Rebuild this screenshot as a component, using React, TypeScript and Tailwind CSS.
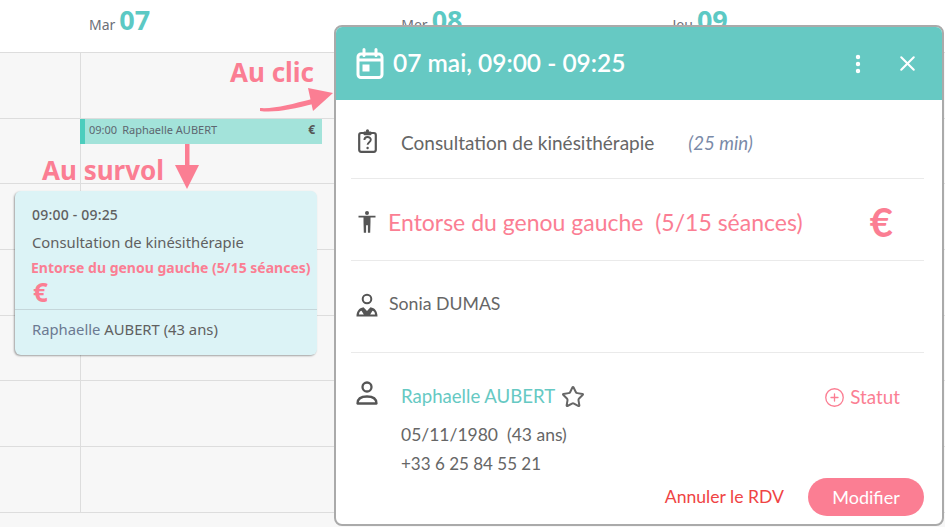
import { X, MoreVertical, Star, CirclePlus } from 'lucide-react';

const rows = [0, 1, 2, 3, 4, 5, 6];

function CalendarIcon() {
    return (
        <svg width="28" height="31" viewBox="0 0 28 31" fill="none" className="shrink-0">
            <rect x="2" y="6" width="24" height="23.5" rx="3" stroke="white" strokeWidth="3" />
            <path d="M2 12h24" stroke="white" strokeWidth="3" />
            <path d="M8 1.5v6M20 1.5v6" stroke="white" strokeWidth="3" strokeLinecap="round" />
            <rect x="6.5" y="16.5" width="7" height="7" fill="white" />
        </svg>
    );
}

function ClipboardIcon() {
    return (
        <svg width="19" height="24" viewBox="0 0 19 24" fill="none" className="shrink-0">
            <rect x="1.2" y="4" width="16.6" height="18.8" rx="2" stroke="#555" strokeWidth="2.2" />
            <rect x="5.5" y="2.6" width="8" height="3.6" rx="1" fill="#555" />
            <circle cx="9.5" cy="1.9" r="1.6" fill="#555" />
            <path d="M6.4 11c0-4 6.4-4 6.4-.2 0 2.400-3.200 2.400-3.200 5" stroke="#555" strokeWidth="1.9" />
            <circle cx="9.600" cy="19" r="1.200" fill="#555" />
        </svg>
    );
}

function BodyIcon() {
    return (
        <svg width="18" height="22" viewBox="0 0 18 22" fill="#555" className="shrink-0">
            <circle cx="9" cy="2" r="2" />
            <path d="M0.500 4.700h17v1.800h-5v4.500l-.3 10.800h-2.300v-7.500h-1.800v7.500H5.800L5.500 11V6.500h-5z" />
        </svg>
    );
}

function DoctorIcon() {
    return (
        <svg width="22" height="24" viewBox="0 0 22 24" fill="none" className="shrink-0">
            <circle cx="11" cy="6" r="4.300" stroke="#555" strokeWidth="2" />
            <path d="M.5 23.500c0-5.500 2.500-8.500 7-9.300l3.500 3.800 3.500-3.800c4.500.8 7 3.800 7 9.300z" fill="#555" />
            <path d="M3 21.500c0-1.800.8-3.200 2.500-3.700l2.300 3.700zM19 21.500c0-1.800-.8-3.200-2.500-3.700l-2.300 3.700z" fill="white" />
        </svg>
    );
}

function PersonIcon() {
    return (
        <svg width="22" height="24" viewBox="0 0 22 24" fill="none" className="shrink-0">
            <circle cx="11" cy="6" r="4.500" stroke="#555" strokeWidth="2.300" />
            <path d="M1.500 22.500c0-5 3.500-7 9.500-7s9.500 2 9.500 7z" stroke="#555" strokeWidth="2.300" strokeLinejoin="round" />
        </svg>
    );
}

function DayLabel({ day, num, className }: { day: string; num: string; className: string }) {
    return (
        <div className={`flex items-baseline gap-1 ${className}`}>
            <span className="text-[14px] text-[#6b6f78]">{day}</span>
            <span className="text-[27px] leading-none font-bold text-[#5cc9c4]">{num}</span>
        </div>
    );
}

function Arrows() {
    return (
        <svg width="945" height="527" viewBox="0 0 945 527" fill="#fb7e93" className="absolute inset-0 pointer-events-none">
            <path d="M260 108c15 1 32-4 52-9l1 5c-20 5-38 9-53 7z" />
            <path d="M308 88l25 5-20 18z" />
            <path d="M185 144h4.500v22H185z" />
            <path d="M175 165h24l-12 24z" />
        </svg>
    );
}

function HoverCard() {
    return (
        <div className="absolute left-[15px] top-[191px] w-[302px] h-[164px] rounded-md bg-[#dcf3f6] shadow-[-1px_1px_2px_rgba(0,0,0,0.35)] text-[#606060] font-['Noto_Sans',sans-serif]">
            <div className="pl-[17px] pt-[14px] text-[14px] tracking-[0.2px] leading-[20px] font-medium">09:00 - 09:25</div>
            <div className="pl-[17px] pt-[7px] text-[14.800px] leading-[20px]">Consultation de kinésithérapie</div>
            <div className="pl-[16px] pt-[6px] text-[14px] leading-[20px] font-bold text-[#fb7e93] whitespace-nowrap">Entorse du genou gauche (5/15 séances)</div>
            <div className="pl-[18px] h-[28px] text-[26px] leading-[28px] font-bold text-[#fb7e93]">€</div>
            <div className="mt-[3px] border-t border-[#c5d6da] pl-[17px] pt-[9px] text-[14.800px] leading-[20px]">
                <span className="text-[#6c7a92]">Raphaelle</span> AUBERT (43 ans)
            </div>
        </div>
    );
}

function Popover() {
    return (
        <div className="absolute left-[334px] top-[25px] w-[610px] h-[501px] rounded-lg border-2 border-[#aaa] bg-white overflow-hidden text-[#666] font-['Lato',sans-serif]">
            <div className="h-[73px] bg-[#66c9c3] flex items-center pl-[20px] pr-[22px] text-white">
                <CalendarIcon />
                <div className="ml-[9px] mb-[1px] text-[24.500px] font-semibold">07 mai, 09:00 - 09:25</div>
                <MoreVertical className="ml-auto" size={24} strokeWidth={2.400} />
                <X className="ml-[25px]" size={25} strokeWidth={2} />
            </div>
            <div className="pl-[15px] pr-[18px]">
                <div className="h-[79px] flex items-center border-b border-[#eaeaea] pl-[7px] pt-[3px]">
                    <ClipboardIcon />
                    <span className="ml-[24px] mt-[5px] text-[19px]">Consultation de kinésithérapie</span>
                    <span className="ml-[34px] mt-[5px] text-[18.700px] italic text-[#7a8aa8]">(25 min)</span>
                </div>
                <div className="h-[82px] flex items-center border-b border-[#eaeaea] pl-[7px] pt-[5px] text-[#fb7e93]">
                    <BodyIcon />
                    <span className="ml-[12px] text-[23px] whitespace-pre">Entorse du genou gauche  (5/15 séances)</span>
                    <span className="ml-auto mr-[31px] text-[40px] leading-none font-bold">€</span>
                </div>
                <div className="h-[92px] flex items-center border-b border-[#eaeaea] pl-[5px] pb-[4px]">
                    <DoctorIcon />
                    <span className="ml-[11px] text-[17.700px]">Sonia DUMAS</span>
                </div>
                <div className="flex pl-[5px] pt-[28px]">
                    <PersonIcon />
                    <div className="ml-[23px] flex-1">
                        <div className="flex items-center h-[32px]">
                            <span className="text-[18.600px] text-[#66c9c3]">Raphaelle AUBERT</span>
                            <Star className="ml-[6px]" size={24} strokeWidth={2} />
                            <CirclePlus className="ml-auto text-[#fb7e93]" size={21} strokeWidth={1.500} />
                            <span className="ml-[5px] mr-[24px] text-[18.800px] text-[#fb7e93]">Statut</span>
                        </div>
                        <div className="mt-[7px] text-[17.500px] leading-[29px] whitespace-pre">05/11/1980  (43 ans)</div>
                        <div className="text-[17px] leading-[29px]">+33 6 25 84 55 21</div>
                    </div>
                </div>
                <div className="absolute right-[18px] bottom-[8px] flex items-center gap-[24px]">
                    <span className="text-[17.600px] text-[#ef4444]">Annuler le RDV</span>
                    <button className="w-[116px] h-[38px] rounded-full bg-[#fb7e93] text-[18px] text-white">Modifier</button>
                </div>
            </div>
        </div>
    );
}

export default function App() {
    return (
        <div className="relative w-[945px] h-[527px] overflow-hidden bg-[#f7f7f7] font-['Noto_Sans',sans-serif]">
            {/* Day header */}
            <div className="h-[53px] bg-white border-b border-[#ddd] flex pt-[6px]">
                <DayLabel day="Mar" num="07" className="ml-[89px]" />
                <DayLabel day="Mer" num="08" className="ml-[251px]" />
                <DayLabel day="Jeu" num="09" className="ml-[210px]" />
            </div>

            {/* Time grid */}
            {rows.map((r) => (
                <div key={r} className="flex h-[65.700px] border-b border-[#ddd]">
                    <div className="w-[81px] border-r border-[#ddd]" />
                </div>
            ))}

            {/* Appointment in the grid */}
            <div className="absolute left-[80px] top-[119px] w-[242px] h-[25px] bg-[#a3e3da] border-l-[5px] border-[#4ccdbd] flex items-center pl-[4px] pr-[7px] pb-[3px] text-[11px] text-[#5d6670]">
                <span>09:00</span>
                <span className="ml-[5px]">Raphaelle AUBERT</span>
                <span className="ml-auto font-bold text-[#555] text-[12px]">€</span>
            </div>

            <HoverCard />

            <div className="absolute left-[230px] top-[55px] text-[26px] font-bold text-[#fb7e93] leading-[34px]">Au clic</div>
            <div className="absolute left-[42px] top-[153px] text-[26px] font-bold text-[#fb7e93] leading-[34px]">Au survol</div>
            <Arrows />

            <Popover />
        </div>
    );
}
